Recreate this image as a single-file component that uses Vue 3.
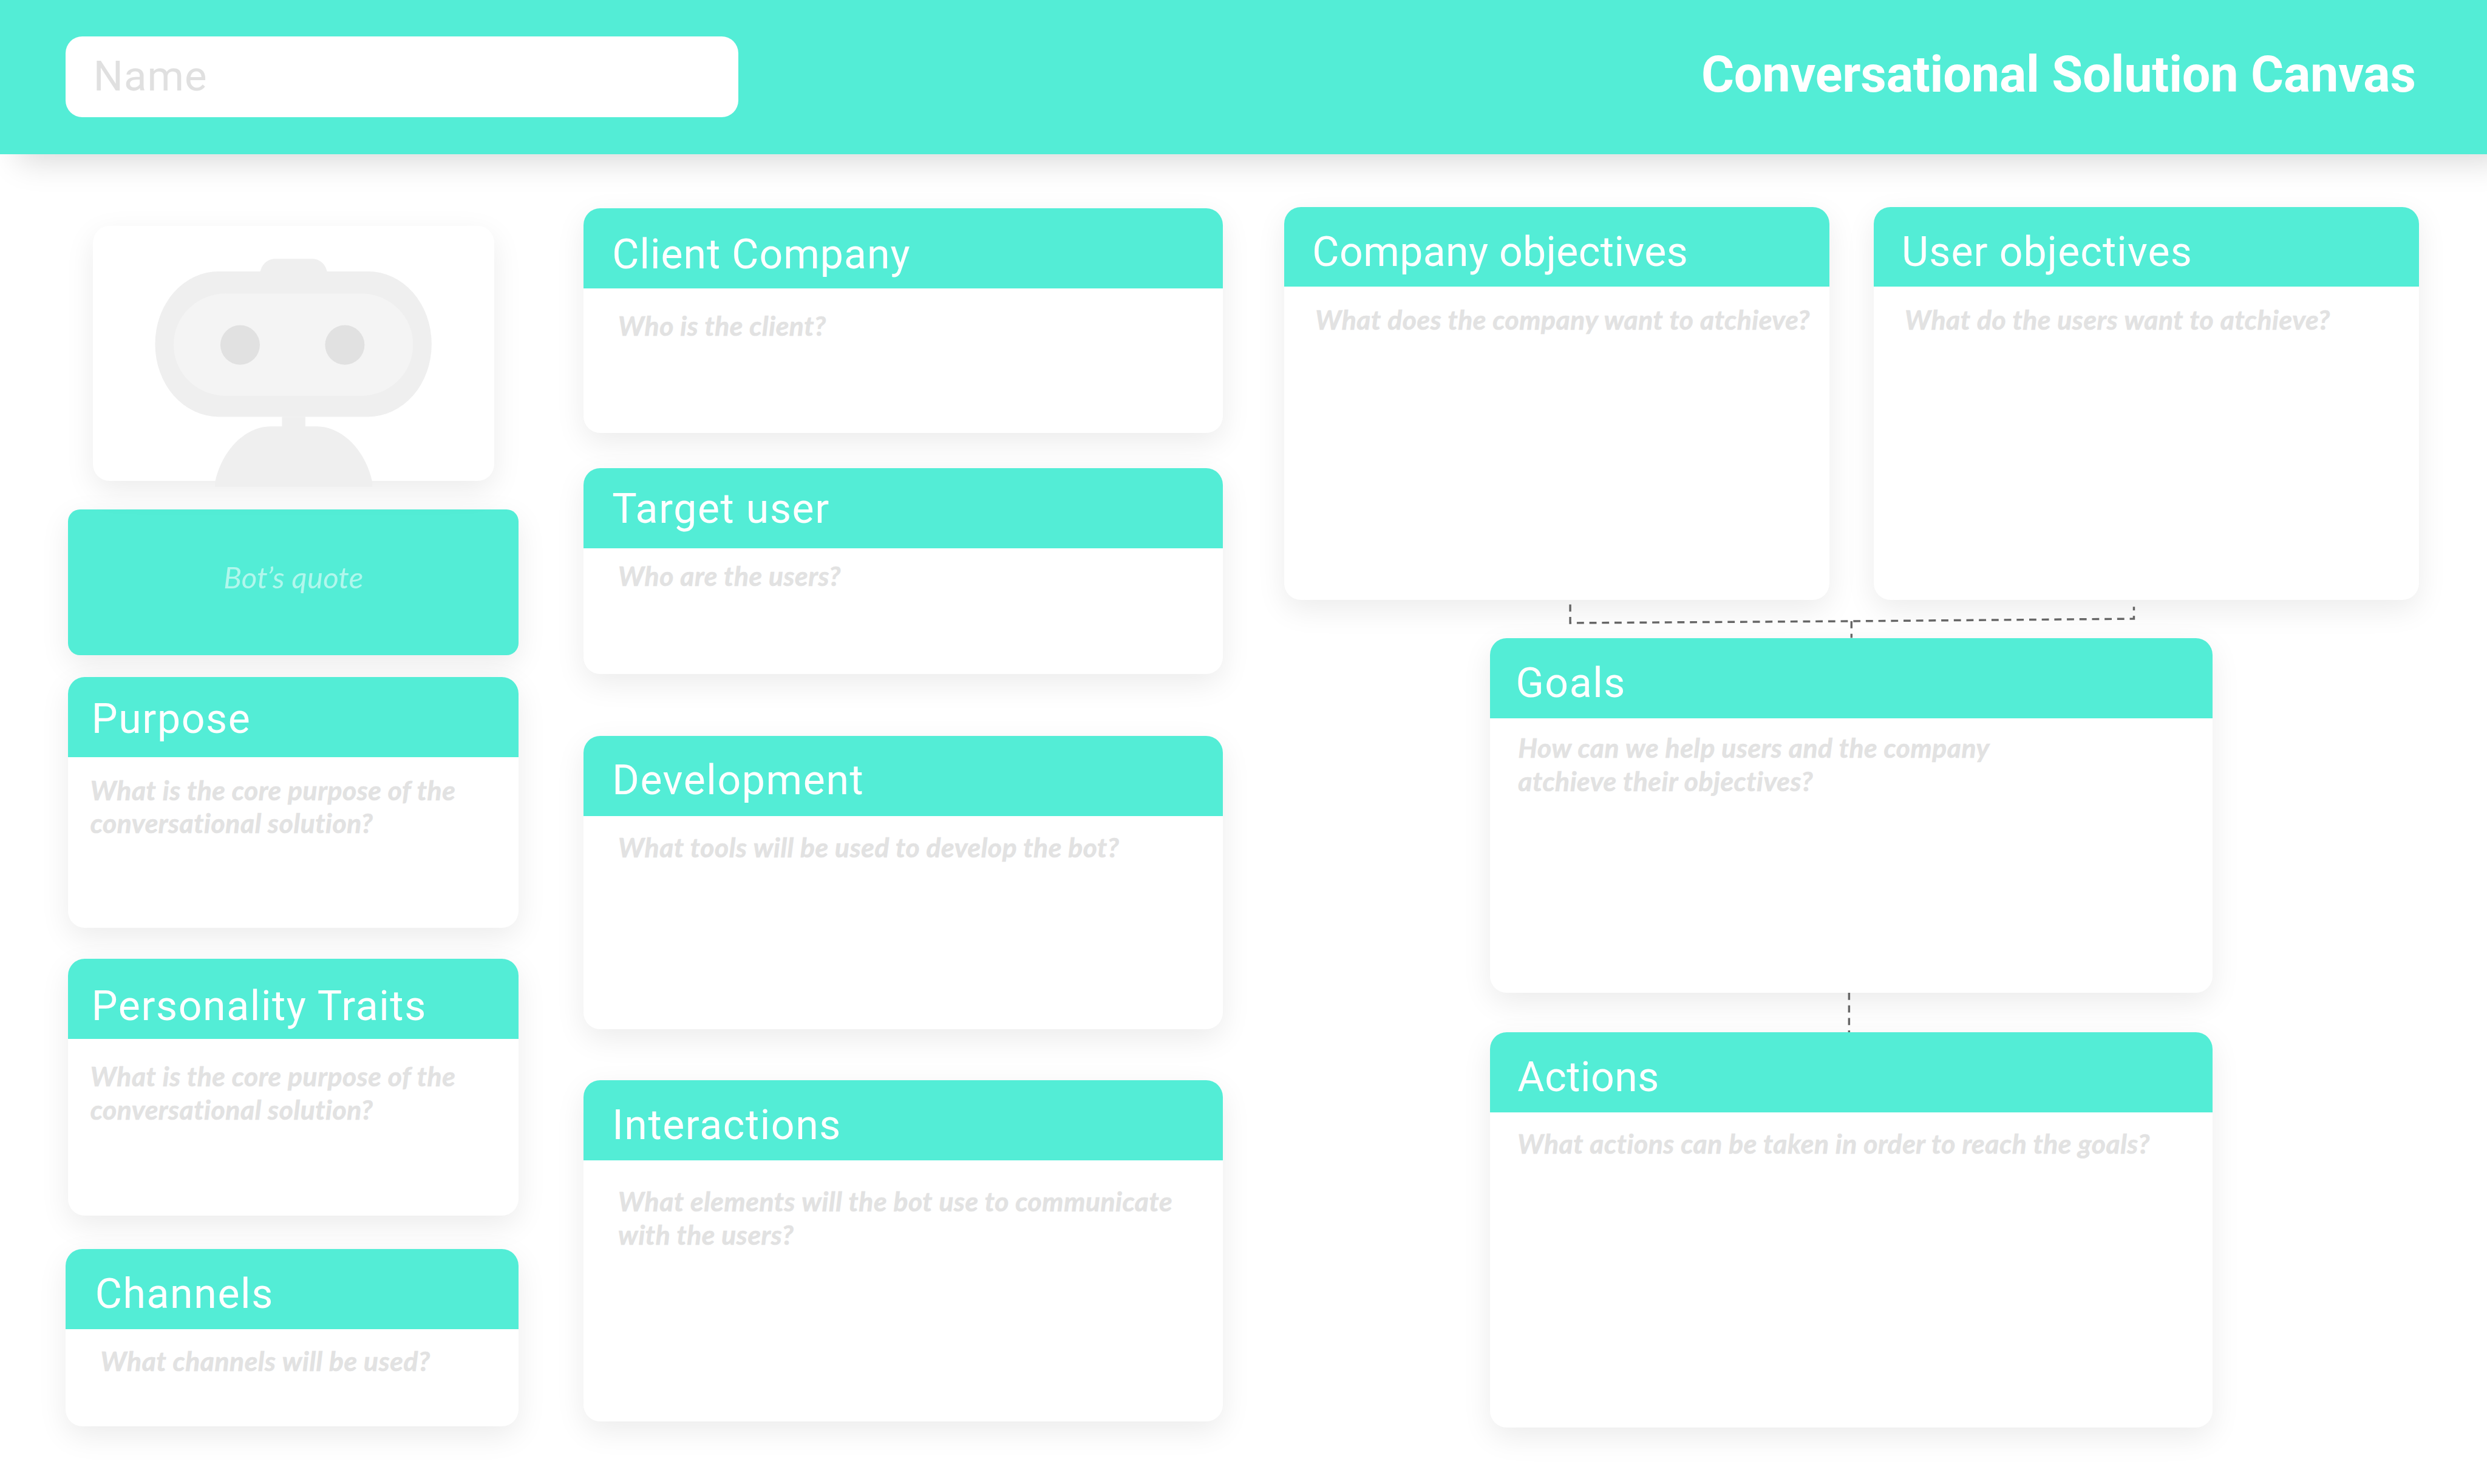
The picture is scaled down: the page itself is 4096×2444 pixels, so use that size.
<script setup>
const col1 = [
  { cls: 'purpose', title: 'Purpose', hint: ['What is the core purpose of the', 'conversational solution?'] },
  { cls: 'traits', title: 'Personality Traits', hint: ['What is the core purpose of the', 'conversational solution?'] },
  { cls: 'channels', title: 'Channels', hint: ['What channels will be used?'] }
]
const col2 = [
  { cls: 'client', title: 'Client Company', hint: ['Who is the client?'] },
  { cls: 'target', title: 'Target user', hint: ['Who are the users?'] },
  { cls: 'dev', title: 'Development', hint: ['What tools will be used to develop the bot?'] },
  { cls: 'inter', title: 'Interactions', hint: ['What elements will the bot use to communicate', 'with the users?'] }
]
const objectives = [
  { cls: 'obj company', title: 'Company objectives', hint: ['What does the company want to atchieve?'] },
  { cls: 'obj user', title: 'User objectives', hint: ['What do the users want to atchieve?'] }
]
const lower = [
  { cls: 'goals', title: 'Goals', hint: ['How can we help users and the company', 'atchieve their objectives?'] },
  { cls: 'actions', title: 'Actions', hint: ['What actions can be taken in order to reach the goals?'] }
]
</script>

<template>
  <div class="page">
    <header class="top">
      <div class="name">Name</div>
      <h1 class="title">Conversational Solution Canvas</h1>
    </header>

    <main class="board">
      <section class="col col1">
        <div class="avatar">
          <svg class="robot" viewBox="0 0 671 440" aria-hidden="true">
            <path fill="#efefef" d="M279 80c2-15 12-25 26-25h61c14 0 24 10 26 25z" />
            <rect x="104" y="76" width="462" height="243" rx="106" ry="121" fill="#efefef" />
            <rect x="135" y="113" width="400" height="171" rx="87" ry="85" fill="#f4f4f4" />
            <ellipse cx="246" cy="199" rx="33" ry="33" fill="#e1e1e1" />
            <ellipse cx="421" cy="199" rx="33" ry="33" fill="#e1e1e1" />
            <rect x="316" y="319" width="39" height="22" fill="#efefef" />
            <path fill="#efefef" d="M204 436v-8c12-54 50-92 92-93h79c42 1 80 39 92 93v8z" />
          </svg>
        </div>
        <div class="quote">Bot’s quote</div>
        <article v-for="c in col1" :key="c.title" class="card" :class="c.cls">
          <h2>{{ c.title }}</h2>
          <p><span v-for="l in c.hint" :key="l">{{ l }}</span></p>
        </article>
      </section>

      <section class="col col2">
        <article v-for="c in col2" :key="c.title" class="card" :class="c.cls">
          <h2>{{ c.title }}</h2>
          <p><span v-for="l in c.hint" :key="l">{{ l }}</span></p>
        </article>
      </section>

      <section class="col col3">
        <div class="pair">
          <article v-for="c in objectives" :key="c.title" class="card" :class="c.cls">
            <h2>{{ c.title }}</h2>
            <p><span v-for="l in c.hint" :key="l">{{ l }}</span></p>
          </article>
        </div>
        <article v-for="c in lower" :key="c.title" class="card" :class="c.cls">
          <h2>{{ c.title }}</h2>
          <p><span v-for="l in c.hint" :key="l">{{ l }}</span></p>
        </article>
        <svg class="links" viewBox="0 0 1896 1400" aria-hidden="true">
          <path d="M478 664v31l470-3 472-4v-20M948 692v28M944 1313v66" />
        </svg>
      </section>
    </main>
  </div>
</template>

<style scoped>
.page {
  zoom: 0.98556;
  width: 4156px;
  height: 2480px;
  background: #fff;
  overflow: hidden;
  font-family: Roboto, "Liberation Sans", sans-serif;
}
.top {
  position: relative;
  z-index: 1;
  height: 258px;
  background: #53edd6;
  box-shadow: 30px 12px 50px rgba(0, 0, 0, 0.15);
  display: flex;
  justify-content: space-between;
  padding: 61px 119px 0 110px;
  box-sizing: border-box;
}
.name {
  width: 1124px;
  height: 135px;
  background: #fff;
  border-radius: 28px;
  color: #e0e0e0;
  font-size: 70px;
  line-height: 134px;
  padding-left: 46px;
  box-sizing: border-box;
  letter-spacing: 1px;
}
.title {
  margin: 16px 0 0;
  color: #fff;
  font-size: 84px;
  font-weight: 700;
  line-height: 96px;
  letter-spacing: -0.2px;
  white-space: nowrap;
}
.board {
  display: flex;
  align-items: flex-start;
}
.col {
  display: flex;
  flex-direction: column;
  align-items: flex-start;
  position: relative;
}
.col1 { width: 757px; margin: 119px 0 0 110px; }
.col2 { width: 1069px; margin: 90px 0 0 108px; }
.col3 { width: 1896px; margin: 88px 0 0 102px; }

.avatar {
  position: relative;
  width: 671px;
  height: 427px;
  margin-left: 45px;
  background: #fff;
  border-radius: 28px;
  box-shadow: 0 16px 50px rgba(0, 0, 0, 0.08);
}
.robot {
  position: absolute;
  left: 0;
  top: 0;
  width: 671px;
  height: 440px;
  overflow: visible;
}
.quote {
  width: 753px;
  height: 244px;
  margin: 47px 0 0 4px;
  background: #53edd6;
  border-radius: 20px;
  box-shadow: 0 16px 50px rgba(0, 0, 0, 0.08);
  color: rgba(255, 255, 255, 0.55);
  font: italic 400 50px/226px Lato, sans-serif;
  letter-spacing: 0.2px;
  text-align: center;
}
.card {
  background: #fff;
  border-radius: 28px;
  box-shadow: 0 16px 50px rgba(0, 0, 0, 0.08);
  overflow: hidden;
  flex: none;
}
.card h2 {
  margin: 0;
  height: 134px;
  background: #53edd6;
  color: #fff;
  font-size: 69px;
  font-weight: 400;
  line-height: 150px;
  letter-spacing: 1.6px;
  padding-left: 39px;
  white-space: nowrap;
}
.card p {
  margin: 0;
  color: #e2e2e2;
  font: italic 700 45px/55px Lato, sans-serif;
  letter-spacing: 0.6px;
  -webkit-text-stroke: 0.7px #e2e2e2;
  white-space: nowrap;
}
.card p span { display: block; }

.purpose { width: 753px; height: 419px; margin: 36px 0 0 4px; }
.purpose h2 { line-height: 141px; }
.purpose p { padding: 28px 0 0 37px; }
.traits { width: 753px; height: 429px; margin: 52px 0 0 4px; }
.traits h2 { line-height: 160px; }
.traits p { padding: 35px 0 0 37px; }
.channels { width: 757px; height: 296px; margin-top: 56px; }
.channels h2 { padding-left: 49px; line-height: 151px; }
.channels p { padding: 26px 0 0 58px; }

.client, .target, .dev, .inter { width: 1069px; }
.client { height: 375px; }
.client h2 { padding-left: 48px; line-height: 155px; letter-spacing: 1px; }
.client p { padding: 34px 0 0 58px; }
.target { height: 344px; margin-top: 59px; }
.target h2 { padding-left: 48px; line-height: 136px; }
.target p { padding: 19px 0 0 58px; }
.dev { height: 490px; margin-top: 104px; }
.dev h2 { padding-left: 48px; }
.dev p { padding: 24px 0 0 58px; }
.inter { height: 570px; margin-top: 85px; }
.inter h2 { padding-left: 48px; line-height: 151px; }
.inter p { padding: 41px 0 0 58px; }

.pair { display: flex; gap: 74px; }
.obj { width: 911px; height: 656px; }
.obj h2 { padding-left: 47px; height: 133px; line-height: 151px; }
.company h2 { letter-spacing: 0.4px; }
.user h2 { letter-spacing: 1.1px; }
.obj p { padding: 27px 0 0 52px; }
.goals, .actions { width: 1207px; margin-left: 344px; }
.goals { height: 593px; margin-top: 64px; }
.goals h2 { padding-left: 43px; line-height: 151px; }
.goals p { padding: 22px 0 0 47px; }
.actions { height: 660px; margin-top: 66px; }
.actions h2 { padding-left: 46px; line-height: 151px; letter-spacing: 0.5px; }
.actions p { padding: 24px 0 0 46px; }

.links {
  position: absolute;
  left: 0;
  top: 0;
  width: 1896px;
  height: 1400px;
  pointer-events: none;
  overflow: visible;
}
.links path {
  fill: none;
  stroke: #666;
  stroke-width: 3.5;
  stroke-dasharray: 12 9;
}
</style>

<style>
html, body { margin: 0; background: #fff; overflow: hidden; }
</style>
